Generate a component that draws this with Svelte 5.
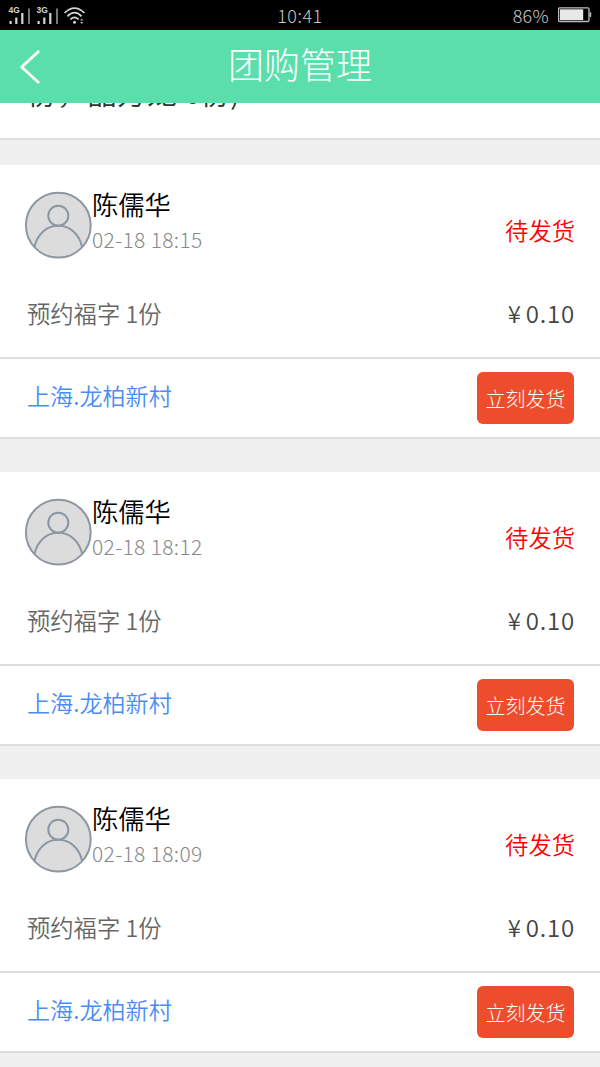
<script lang="ts">
  interface Order {
    name: string;
    time: string;
    goods: string;
    price: string;
    place: string;
  }

  const orders: Order[] = ["02-18 18:15", "02-18 18:12", "02-18 18:09"].map((time) => ({
    name: "陈儒华",
    time,
    goods: "预约福字 1份",
    price: "0.10",
    place: "上海.龙柏新村",
  }));

  const sims = ["4G", "3G"];
</script>

<div class="screen">
  <div class="status">
    <div class="signals">
      {#each sims as sim}
        <svg class="signal" width="22" height="18" viewBox="0 0 22 18">
          <text x="0.5" y="6.8">{sim}</text>
          <path d="M1.5 15h2.2v3H1.5z M7.2 11.5h2.2V18H7.2z M13.2 7h2.2v11h-2.2z" fill="#d4d4d4" />
          <path d="M20 2.5h2V18h-2z" fill="#777" />
        </svg>
      {/each}
      <svg class="wifi" width="22" height="18" viewBox="0 0 22 18">
        <g fill="none" stroke="#d4d4d4" stroke-width="1.7">
          <path d="M.5 7Q10.5-2.9 20.5 7" />
          <path d="M3.4 10.3Q10.5 3 17.6 10.3" />
          <path d="M6.4 13.5Q10.5 9.3 14.6 13.5" />
        </g>
        <circle cx="10.5" cy="16.3" r="1.5" fill="#d4d4d4" />
        <path d="M16 14.5l1.7-2 1.7 2z M16 16h3.4l-1.7 2z" fill="#aaa" />
      </svg>
    </div>
    <span class="clock">10:41</span>
    <div class="power">
      <span>86%</span>
      <svg width="34" height="16" viewBox="0 0 34 16">
        <rect x="0.6" y="0.9" width="30.4" height="13.6" rx="1.2" fill="none" stroke="#bdbdbd" stroke-width="1.3" />
        <rect x="2" y="2.3" width="23.2" height="10.8" fill="#e8e8e8" />
        <rect x="31.5" y="5.3" width="1.7" height="4.6" fill="#bdbdbd" />
      </svg>
    </div>
  </div>

  <header>
    <svg class="back" width="22" height="36" viewBox="0 0 22 36">
      <path d="M20 3L3.7 18L20 33" fill="none" stroke="#fff" stroke-width="2.8" stroke-linecap="square" />
    </svg>
    <h1>团购管理</h1>
  </header>

  <main>
    <section class="previous"><p>份，晶方龙 6份)</p></section>

    {#each orders as order}
      <section class="order">
        <div class="info">
          <div class="customer">
            <svg class="avatar" width="68" height="68" viewBox="0 0 68 68">
              <g fill="#dcdcdc" stroke="#8c97a3" stroke-width="2">
                <circle cx="34.3" cy="34.2" r="32.4" />
                <circle cx="34.3" cy="24.7" r="10" />
                <path d="M10.5 55.7C13.5 42.9 22.7 34.7 34.3 34.7S55.1 42.9 58.1 55.7" fill="none" />
              </g>
            </svg>
            <div class="who">
              <span class="name">{order.name}</span>
              <span class="time">{order.time}</span>
            </div>
            <span class="state">待发货</span>
          </div>
          <div class="line">
            <span class="goods">{order.goods}</span>
            <span class="price"><i>¥</i>{order.price}</span>
          </div>
        </div>
        <div class="bottom">
          <span class="place">{order.place}</span>
          <button>立刻发货</button>
        </div>
      </section>
    {/each}
  </main>
</div>

<style>
  :global(body) {
    margin: 0;
    background: #f0f0f0;
  }
  .screen {
    width: 600px;
    height: 1067px;
    overflow: hidden;
    display: flex;
    flex-direction: column;
    background: #f0f0f0;
    font-family: "Noto Sans CJK SC", sans-serif;
    font-weight: 350;
  }
  .status {
    flex: none;
    box-sizing: border-box;
    height: 30px;
    padding: 0 8px;
    display: grid;
    grid-template-columns: 1fr auto 1fr;
    align-items: center;
    background: #000;
    color: #c8c8c8;
    font-size: 18px;
    font-weight: 300;
    line-height: 30px;
  }
  .signals {
    display: flex;
    gap: 6px;
  }
  .signal text {
    font: bold 8.5px "Liberation Sans", sans-serif;
    fill: #d4d4d4;
  }
  .clock {
    letter-spacing: 0.5px;
  }
  .power {
    display: flex;
    justify-content: flex-end;
    align-items: center;
    gap: 9px;
  }
  .power span {
    letter-spacing: 0.3px;
  }
  header {
    flex: none;
    box-sizing: border-box;
    height: 73px;
    padding: 0 18px;
    display: grid;
    grid-template-columns: 22px 1fr 22px;
    align-items: center;
    background: #5adeac;
    color: #fff;
  }
  h1 {
    margin: 0 0 7px;
    text-align: center;
    font-size: 36px;
    font-weight: 300;
    line-height: 64px;
  }
  main {
    flex: 1;
    min-height: 0;
    overflow: hidden;
  }
  section {
    background: #fff;
    border-bottom: 2px solid #dedede;
  }
  .previous {
    box-sizing: border-box;
    height: 37px;
    margin-bottom: 25px;
    overflow: hidden;
  }
  .previous p {
    margin: -30px 0 0 27px;
    font-size: 30px;
    line-height: 36px;
    color: #333;
  }
  .order {
    box-sizing: border-box;
    height: 274px;
    margin-bottom: 33px;
  }
  .info {
    box-sizing: border-box;
    height: 194px;
    padding: 26px 25px 0 24px;
    border-bottom: 2px solid #dedede;
  }
  .customer {
    display: flex;
    height: 68px;
  }
  .who {
    flex: 1;
    display: flex;
    flex-direction: column;
  }
  .name {
    font-size: 26.3px;
    line-height: 26px;
    color: #000;
  }
  .time {
    font-size: 21px;
    font-weight: 300;
    line-height: 44px;
    letter-spacing: 0.35px;
    color: #888;
  }
  .state {
    font-size: 23.3px;
    line-height: 78px;
    color: #f00;
  }
  .line {
    display: flex;
    justify-content: space-between;
    align-items: center;
    height: 36px;
    margin-top: 36px;
    padding-left: 3px;
    font-size: 23.3px;
  }
  .goods {
    color: #666;
  }
  .price {
    margin-bottom: 2px;
    color: #444;
    font-size: 24px;
    letter-spacing: 0.8px;
  }
  .price i {
    font-style: normal;
    margin-right: 4px;
  }
  .bottom {
    display: flex;
    justify-content: space-between;
    align-items: center;
    height: 78px;
    padding: 0 26px 0 27px;
  }
  .place {
    margin-bottom: 7px;
    font-size: 23.1px;
    color: #4a8cf6;
  }
  button {
    width: 97px;
    height: 52px;
    padding: 0;
    border: 0;
    border-radius: 6px;
    background: #ed4d2d;
    color: #fff;
    font: inherit;
    font-size: 20px;
    font-weight: 300;
  }
</style>
